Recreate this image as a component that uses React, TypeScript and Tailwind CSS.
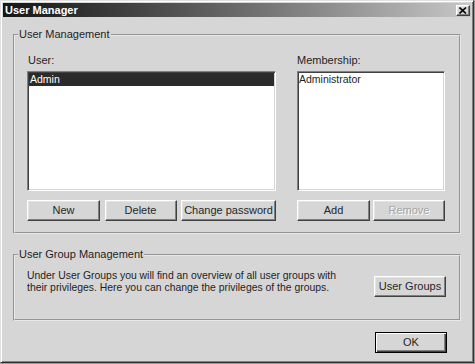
import type { ReactNode } from 'react';

const raised =
  'border border-t-white border-l-white border-r-[#404040] border-b-[#404040] shadow-[inset_-1px_-1px_0_#808080,inset_1px_1px_0_#e4e4e4]';

function Button({
  children, width, disabled = false, isDefault = false,
}: { children: ReactNode; width: string; disabled?: boolean; isDefault?: boolean }) {
  return (
    <button
      type="button"
      className={`${width} h-[21px] flex items-center justify-center bg-[#d6d6d6] text-[11px] ${
        isDefault
          ? 'border border-black shadow-[inset_1px_1px_0_#fff,inset_-1px_-1px_0_#404040,inset_-2px_-2px_0_#808080]'
          : raised
      } ${disabled ? 'text-[#a4a4a4] [text-shadow:1px_1px_0_#fff]' : 'text-[#262626]'}`}
    >
      {children}
    </button>
  );
}

function ListBox({ children, width }: { children: ReactNode; width: string }) {
  return (
    <div
      className={`${width} h-[120px] bg-white border border-t-[#808080] border-l-[#808080] border-r-white border-b-white shadow-[inset_1px_1px_0_#404040,inset_-1px_-1px_0_#d6d6d6] p-[2px] pt-[1px]`}
    >
      {children}
    </div>
  );
}

function Group({ title, children }: { title: string; children: ReactNode }) {
  return (
    <fieldset className="w-[448px] border-2 [border-style:groove] border-[#e8e8e8] p-0 m-0">
      <legend className="ml-[3px] px-[1px] text-[11px] leading-[13px] text-[#1e1e1e]">{title}</legend>
      {children}
    </fieldset>
  );
}

export default function App() {
  return (
    <div className="w-[475px] h-[364px] bg-[#9a9a9a] font-['Liberation_Sans',Arial,sans-serif]">
      <div className="w-[474px] h-[363px] bg-[#d6d6d6] border border-t-[#e0e0e0] border-l-[#e0e0e0] border-r-[#303030] border-b-[#303030] shadow-[inset_1px_1px_0_#fff,inset_-1px_-1px_0_#808080] flex flex-col">
        {/* title bar */}
        <div className="mx-[2px] mt-[2px] h-[14px] bg-gradient-to-r from-[#161616] via-[#6a6a6a] to-[#c8c8c8] flex items-center justify-between pl-[2px] pr-[1px]">
          <span className="text-[11px] font-bold text-white leading-none">User Manager</span>
          <div className={`w-[14px] h-[11px] bg-[#d6d6d6] flex items-center justify-center ${raised}`}>
            <svg width="8" height="7" viewBox="0 0 8 7">
              <path d="M0.5 0.5 L7 6.5 M7 0.5 L0.5 6.5" stroke="#000" strokeWidth="1.6" />
            </svg>
          </div>
        </div>

        <div className="pl-[12px] pt-[11px] flex flex-col">
          <Group title="User Management">
            <div className="pl-[12px] pr-[14px] pt-[13px] pb-[11px] flex gap-[21px]">
              <div className="w-[249px] flex flex-col">
                <span className="text-[11px] leading-[13px] text-[#1e1e1e] pl-[1px]">User:</span>
                <div className="mt-[4px]">
                  <ListBox width="w-[249px]">
                    <div className="bg-[#2b2b2b] text-white text-[10.5px] leading-[13px] pl-[1px] -mx-[1px]">Admin</div>
                  </ListBox>
                </div>
                <div className="mt-[9px] flex justify-between">
                  <Button width="w-[73px]">New</Button>
                  <Button width="w-[72px]">Delete</Button>
                  <Button width="w-[95px]">Change password</Button>
                </div>
              </div>
              <div className="w-[148px] flex flex-col">
                <span className="text-[11px] leading-[13px] text-[#1e1e1e]">Membership:</span>
                <div className="mt-[4px]">
                  <ListBox width="w-[148px]">
                    <div className="text-[#1e1e1e] text-[10.5px] leading-[13px] -ml-[1px]">Administrator</div>
                  </ListBox>
                </div>
                <div className="mt-[9px] flex justify-between">
                  <Button width="w-[73px]">Add</Button>
                  <Button width="w-[72px]" disabled>Remove</Button>
                </div>
              </div>
            </div>
          </Group>

          <div className="mt-[14px]">
            <Group title="User Group Management">
              <div className="h-[58px] pl-[12px] pr-[13px] flex justify-between items-start">
                <p className="mt-[9px] text-[10.4px] leading-[12px] text-[#1e1e1e]">
                  Under User Groups you will find an overview of all user groups with
                  <br />
                  their privileges. Here you can change the privileges of the groups.
                </p>
                <div className="mt-[15px]">
                  <Button width="w-[72px]">User Groups</Button>
                </div>
              </div>
            </Group>
          </div>

          <div className="mt-[11px] w-[448px] pr-[14px] flex justify-end">
            <Button width="w-[72px]" isDefault>OK</Button>
          </div>
        </div>
      </div>
    </div>
  );
}
